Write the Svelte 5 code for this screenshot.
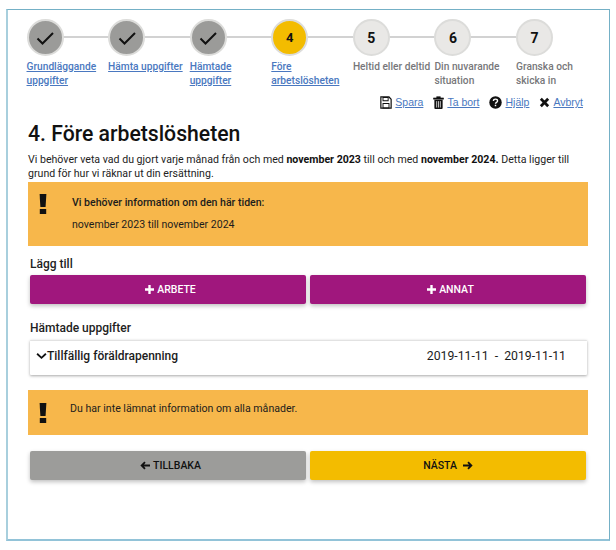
<script>
  const steps = [
    { label: 'Grundläggande uppgifter', state: 'done' },
    { label: 'Hämta uppgifter', state: 'done' },
    { label: 'Hämtade uppgifter', state: 'done' },
    { label: 'Före arbetslösheten', state: 'current', n: 4 },
    { label: 'Heltid eller deltid', state: 'todo', n: 5 },
    { label: 'Din nuvarande situation', state: 'todo', n: 6 },
    { label: 'Granska och skicka in', state: 'todo', n: 7 }
  ];
</script>

{#snippet warn()}
  <svg class="warn-icon" viewBox="0 0 8 20" width="8" height="20"><path d="M0.6 0h6.8l-0.8 13h-5.2z" /><rect x="0.8" y="15" width="6.4" height="5" /></svg>
{/snippet}

<main class="frame">
  <ol class="steps">
    {#each steps as s, i}
      <li class="step">
        {#if i < steps.length - 1}<span class="line"></span>{/if}
        <span class="dot {s.state}">
          {#if s.state === 'done'}
            <svg viewBox="0 0 20 20" width="20" height="20"><path d="M2.5 10.5l5 5L18 5" fill="none" stroke="#111" stroke-width="2" /></svg>
          {:else}
            {s.n}
          {/if}
        </span>
        {#if s.state === 'todo'}
          <span class="label">{s.label}</span>
        {:else}
          <a class="label link" href="#s">{s.label}</a>
        {/if}
      </li>
    {/each}
  </ol>

  <nav class="actions">
    <span class="act">
      <svg viewBox="0 0 14 14" width="12" height="13" preserveAspectRatio="none"><path d="M1 1h9.5L13 3.5V13H1z" fill="none" stroke="#111" stroke-width="1.4"/><path d="M3.5 1.5h6v3.5h-6zM3.5 8h7v5h-7z" fill="none" stroke="#111" stroke-width="1.1"/></svg>
      <a href="#s">Spara</a>
    </span>
    <span class="act">
      <svg viewBox="0 0 12 14" width="11" height="13"><path d="M0.5 2h11v1.4h-11zM4 2V0.6h4V2" fill="#111" stroke="#111" stroke-width="0.6"/><path d="M1.5 4h9v9a1 1 0 0 1-1 1h-7a1 1 0 0 1-1-1z" fill="#111"/><path d="M4 5.5v7M6 5.5v7M8 5.5v7" stroke="#fff" stroke-width="0.8"/></svg>
      <a href="#s">Ta bort</a>
    </span>
    <span class="act">
      <svg viewBox="0 0 14 14" width="13" height="13"><circle cx="7" cy="7" r="6.7" fill="#111"/><path d="M4.8 5.3c0-1.2 1-1.9 2.2-1.9s2.2 0.7 2.2 1.9c0 1.6-2.2 1.6-2.2 3" fill="none" stroke="#fff" stroke-width="1.5"/><rect x="6.2" y="9.4" width="1.6" height="1.6" fill="#fff"/></svg>
      <a href="#s">Hjälp</a>
    </span>
    <span class="act">
      <svg viewBox="0 0 12 12" width="11" height="11"><path d="M2 2l8 8M10 2l-8 8" stroke="#111" stroke-width="3"/></svg>
      <a href="#s">Avbryt</a>
    </span>
  </nav>

  <h1>4. Före arbetslösheten</h1>
  <p class="intro">Vi behöver veta vad du gjort varje månad från och med <b>november 2023</b> till och med <b>november 2024.</b> Detta ligger till grund för hur vi räknar ut din ersättning.</p>

  <section class="alert top">
    {@render warn()}
    <div class="alert-text">
      <strong>Vi behöver information om den här tiden:</strong>
      <span>november 2023 till november 2024</span>
    </div>
  </section>

  <h2 class="add-title">Lägg till</h2>
  <div class="buttons">
    <button class="btn purple lead">
      <svg viewBox="0 0 10 10" width="9" height="9"><path d="M5 0v10M0 5h10" stroke="#fff" stroke-width="2.6"/></svg>
      ARBETE
    </button>
    <button class="btn purple lead">
      <svg viewBox="0 0 10 10" width="9" height="9"><path d="M5 0v10M0 5h10" stroke="#fff" stroke-width="2.6"/></svg>
      ANNAT
    </button>
  </div>

  <h2 class="fetched-title">Hämtade uppgifter</h2>
  <div class="card">
    <span class="card-name">
      <svg viewBox="0 0 12 8" width="11" height="8"><path d="M1.2 1.5L6 6l4.8-4.5" fill="none" stroke="#111" stroke-width="2"/></svg>
      Tillfällig föräldrapenning
    </span>
    <span class="dates">2019-11-11 &nbsp;-&nbsp; 2019-11-11</span>
  </div>

  <section class="alert bottom">
    {@render warn()}
    <p>Du har inte lämnat information om alla månader.</p>
  </section>

  <div class="buttons nav-buttons">
    <button class="btn grey lead">
      <svg viewBox="0 0 12 10" width="10" height="9"><path d="M12 5H2M6 1L2 5l4 4" fill="none" stroke="#111" stroke-width="2.2"/></svg>
      TILLBAKA
    </button>
    <button class="btn yellow trail">
      NÄSTA
      <svg viewBox="0 0 12 10" width="10" height="9"><path d="M0 5h10M6 1l4 4-4 4" fill="none" stroke="#111" stroke-width="2.2"/></svg>
    </button>
  </div>
</main>

<style>
  :global(body) {
    margin: 0;
    background: #fff;
    font-family: Roboto, "Liberation Sans", sans-serif;
    color: #1c1c1c;
  }
  .frame {
    box-sizing: border-box;
    width: 604px;
    height: 532px;
    margin: 9px 0 0 6px;
    padding: 9px 22px 0 20px;
    background: #fff;
    border: 1px solid #74b0c6;
    border-left: 2px solid #a8cfdd;
    border-bottom: 2px solid #92c3d8;
  }
  .steps {
    display: grid;
    grid-template-columns: repeat(7, 81.6px);
    list-style: none;
    margin: 0 0 0 -1.5px;
    padding: 0;
    height: 68px;
  }
  .step {
    position: relative;
    display: flex;
    flex-direction: column;
    align-items: flex-start;
    gap: 4px;
  }
  .line {
    position: absolute;
    left: 36px;
    top: 17px;
    width: 46px;
    height: 2px;
    background: #d2d2d2;
  }
  .dot {
    position: relative;
    box-sizing: border-box;
    width: 37px;
    height: 37px;
    border-radius: 50%;
    border: 2px solid #dcdcda;
    display: flex;
    align-items: center;
    justify-content: center;
    font-weight: 700;
    font-size: 14px;
    color: #111;
    font-family: Roboto, sans-serif;
  }
  .dot.done { background: #9b9b99; }
  .dot.current { background: #f3bc00; font-size: 13px; }
  .dot.todo { background: #e9e8e6; }
  .label {
    font-size: 10.2px;
    line-height: 13.5px;
    font-weight: 500;
    color: #77777a;
    width: 80px;
  }
  .link { color: #4a78c0; }
  .actions {
    display: flex;
    justify-content: flex-end;
    gap: 10px;
    margin: 7px 4px 0 0;
    height: 16px;
    font-family: "Liberation Sans", sans-serif;
    font-size: 10.5px;
    align-items: center;
  }
  .act { display: flex; align-items: center; gap: 3px; }
  .act a { color: #4a78c0; }
  h1 {
    margin: 10px 0 0;
    font-size: 21.2px;
    line-height: 28px;
    font-weight: 500;
    color: #111;
  }
  .intro {
    margin: 5px 0 0;
    font-size: 10.6px;
    line-height: 14px;
    color: #222;
  }
  .intro b { font-weight: 700; color: #111; }
  .alert {
    background: #f7b74b;
    width: 560px;
    box-sizing: border-box;
    display: flex;
  }
  .alert.top {
    margin-top: 1px;
    height: 64px;
    padding: 12px 0 0 11px;
    gap: 25px;
  }
  .warn-icon { fill: #111; flex: none; }
  .alert-text {
    display: flex;
    flex-direction: column;
    gap: 10px;
    font-size: 10.55px;
    line-height: 12px;
    padding-top: 3px;
  }
  .alert-text strong { font-weight: 500; }
  h2 {
    font-size: 12px;
    line-height: 14px;
    font-weight: 500;
    margin: 0;
    padding-left: 2px;
    color: #222;
  }
  .add-title { margin-top: 11px; }
  .buttons {
    display: flex;
    gap: 4px;
    margin: 4px 0 0 2px;
  }
  .btn {
    flex: 0 0 276px;
    height: 29px;
    border: 0;
    border-radius: 2px;
    display: flex;
    align-items: center;
    justify-content: center;
    gap: 3px;
    font-family: Roboto, sans-serif;
    font-weight: 500;
    font-size: 10.5px;
    box-shadow: 0 2px 4px rgba(0, 0, 0, 0.25);
    padding: 0;
  }
  .lead { padding-left: 5px; }
  .trail { gap: 6px; }
  .purple { background: #a0177d; color: #fff; }
  .grey { background: #9c9c9a; color: #111; }
  .yellow { background: #f3bc00; color: #111; }
  .fetched-title { margin-top: 17px; }
  .card {
    box-sizing: border-box;
    width: 557px;
    height: 35px;
    margin: 5px 0 0 2px;
    background: #fff;
    border-top: 1px solid #e2e2e2;
    box-shadow: 0 1px 3px rgba(0, 0, 0, 0.35);
    border-radius: 1px;
    display: flex;
    align-items: center;
    justify-content: space-between;
    padding: 0 21px 5px 6px;
    font-size: 12px;
  }
  .card-name { display: flex; align-items: center; gap: 0; font-weight: 500; }
  .dates { font-size: 12.25px; font-weight: 400; color: #1c1c1c; }
  .alert.bottom {
    margin-top: 15px;
    height: 45px;
    padding: 13px 0 0 11px;
    gap: 23px;
  }
  .alert.bottom p {
    margin: 0;
    font-size: 10.6px;
    line-height: 12px;
    padding-top: 0;
  }
  .nav-buttons { margin-top: 16px; gap: 4px; margin-left: 2px; }
</style>
